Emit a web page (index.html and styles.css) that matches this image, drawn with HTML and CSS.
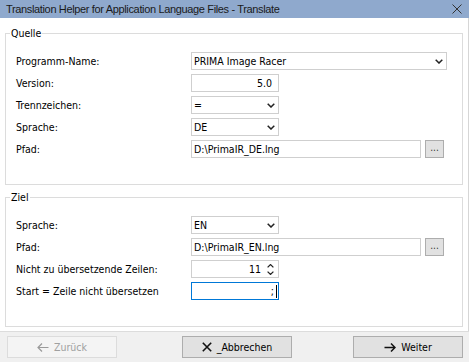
FILE: index.html
```html
<!DOCTYPE html>
<html lang="de">
<head>
    <meta charset="UTF-8">
    <title>Translation Helper for Application Language Files - Translate</title>
    <link rel="stylesheet" href="styles.css">
</head>
<body>
<div class="window">

    <!-- Titelleiste -->
    <div class="titlebar">
        <span class="title">Translation Helper for Application Language Files - Translate</span>
        <svg class="close" width="10" height="10" viewBox="0 0 10 10"><path d="M0.5 0.5 L9.5 9.5 M9.5 0.5 L0.5 9.5" stroke="#333" stroke-width="1" fill="none"/></svg>
    </div>

    <div class="content">
        <fieldset class="group">
            <legend>Quelle</legend>
            <div class="rows">
                <div class="row">
                    <label>Programm-Name:</label>
                    <div class="field select wide"><span>PRIMA Image Racer</span>
                        <svg class="chev" width="8" height="5" viewBox="0 0 8 5"><path d="M0.7 0.7 L4 4 L7.3 0.7" stroke="#222" stroke-width="1.5" fill="none"/></svg>
                    </div>
                </div>
                <div class="row">
                    <label>Version:</label>
                    <div class="field small right"><span>5.0</span></div>
                </div>
                <div class="row">
                    <label>Trennzeichen:</label>
                    <div class="field select small"><span>=</span>
                        <svg class="chev" width="8" height="5" viewBox="0 0 8 5"><path d="M0.7 0.7 L4 4 L7.3 0.7" stroke="#222" stroke-width="1.5" fill="none"/></svg>
                    </div>
                </div>
                <div class="row">
                    <label>Sprache:</label>
                    <div class="field select small"><span>DE</span>
                        <svg class="chev" width="8" height="5" viewBox="0 0 8 5"><path d="M0.7 0.7 L4 4 L7.3 0.7" stroke="#222" stroke-width="1.5" fill="none"/></svg>
                    </div>
                </div>
                <div class="row">
                    <label>Pfad:</label>
                    <div class="field path"><span>D:\PrimaIR_DE.lng</span></div>
                    <div class="browse">...</div>
                </div>
            </div>
        </fieldset>

        <fieldset class="group ziel">
            <legend>Ziel</legend>
            <div class="rows">
                <div class="row">
                    <label>Sprache:</label>
                    <div class="field select small"><span>EN</span>
                        <svg class="chev" width="8" height="5" viewBox="0 0 8 5"><path d="M0.7 0.7 L4 4 L7.3 0.7" stroke="#222" stroke-width="1.5" fill="none"/></svg>
                    </div>
                </div>
                <div class="row">
                    <label>Pfad:</label>
                    <div class="field path"><span>D:\PrimaIR_EN.lng</span></div>
                    <div class="browse">...</div>
                </div>
                <div class="row">
                    <label>Nicht zu übersetzende Zeilen:</label>
                    <div class="field small spin"><span>11</span>
                        <div class="spin-arrows">
                            <svg width="7" height="4" viewBox="0 0 7 4"><path d="M0.6 3.4 L3.5 0.6 L6.4 3.4" stroke="#222" stroke-width="1.3" fill="none"/></svg>
                            <svg width="7" height="4" viewBox="0 0 7 4"><path d="M0.6 0.6 L3.5 3.4 L6.4 0.6" stroke="#222" stroke-width="1.3" fill="none"/></svg>
                        </div>
                    </div>
                </div>
                <div class="row">
                    <label>Start = Zeile nicht übersetzen</label>
                    <div class="field small right focus"><span>;</span><i class="caret"></i></div>
                </div>
            </div>
        </fieldset>
    </div>

    <!-- Knopfleiste -->
    <div class="footer">
        <button class="btn" disabled>
            <svg width="12" height="9" viewBox="0 0 12 9"><path d="M11.5 4.5 H1 M5 0.5 L1 4.5 L5 8.5" stroke="#9a9a9a" stroke-width="1.2" fill="none"/></svg>
            Zurück
        </button>
        <button class="btn btn-cancel">
            <svg width="10" height="10" viewBox="0 0 10 10"><path d="M0.8 0.8 L9.2 9.2 M9.2 0.8 L0.8 9.2" stroke="#111" stroke-width="1.6" fill="none"/></svg>
            _Abbrechen
        </button>
        <button class="btn btn-next">
            <svg width="12" height="9" viewBox="0 0 12 9"><path d="M0.5 4.5 H11 M7 0.5 L11 4.5 L7 8.5" stroke="#111" stroke-width="1.5" fill="none"/></svg>
            Weiter
        </button>
    </div>

</div>
</body>
</html>
```

FILE: styles.css
```css
body {
    margin: 0;
    font-family: "DejaVu Sans Condensed", "DejaVu Sans", sans-serif;
    font-size: 10.5px;
    color: #000;
    background-color: #fff;
}
.window {
    width: 469px;
    height: 362px;
    display: flex;
    flex-direction: column;
    background-color: #fff;
    overflow: hidden;
}
.titlebar {
    height: 17px;
    flex: none;
    background-color: #8fa9cd;
    display: flex;
    align-items: center;
    justify-content: space-between;
    padding: 0 7px 1px 6px;
    font-family: "Liberation Sans", Arial, sans-serif;
    font-size: 11px;
    letter-spacing: -0.35px;
    color: #1a1a1a;
}
.content {
    flex: 1;
    padding: 9px 5px 0 5px;
    border-right: 1px solid #d6d6d6;
}
.group {
    margin: 0;
    padding: 13px 0 26px 10px;
    border: 1px solid #dcdcdc;
}
.group legend {
    padding: 0 1px;
    margin-left: -6px;
    line-height: 12px;
}
.ziel {
    margin-top: 6px;
}
.rows {
    display: flex;
    flex-direction: column;
    gap: 4px;
}
.row {
    display: flex;
    align-items: center;
    height: 18px;
}
.row label {
    width: 175px;
    flex: none;
}
.field {
    box-sizing: border-box;
    height: 18px;
    border: 1px solid #cfcfcf;
    background-color: #fff;
    display: flex;
    align-items: center;
    padding: 0 2px;
    white-space: nowrap;
}
.field span {
    flex: 1;
}
.wide {
    width: 256px;
}
.small {
    width: 88px;
}
.path {
    width: 230px;
}
.select {
    padding-right: 3px;
}
.chev {
    flex: none;
}
.right {
    text-align: right;
    padding-right: 6px;
}
.spin {
    text-align: right;
    padding-right: 4px;
}
.spin span {
    margin-right: 6px;
}
.spin-arrows {
    display: flex;
    flex-direction: column;
    gap: 3px;
}
.spin-arrows svg {
    display: block;
}
.focus {
    border-color: #0078d7;
    padding-right: 1px;
}
.caret {
    display: inline-block;
    width: 1px;
    height: 13px;
    background-color: #000;
    margin-left: 2px;
}
.browse {
    box-sizing: border-box;
    width: 19px;
    height: 18px;
    margin-left: 4px;
    border: 1px solid #adadad;
    background-color: #e1e1e1;
    text-align: center;
    line-height: 14px;
    font-size: 10px;
    color: #333;
}
.footer {
    flex: none;
    display: flex;
    align-items: center;
    padding: 4px 6px 4px 7px;
    border-top: 1px solid #dcdcdc;
    background-color: #f0f0f0;
}
.btn {
    box-sizing: border-box;
    width: 110px;
    height: 22px;
    display: flex;
    align-items: center;
    justify-content: center;
    gap: 5px;
    border: 1px solid #adadad;
    background-color: #e1e1e1;
    font-family: inherit;
    font-size: 10.5px;
    color: #000;
    padding: 0;
}
.btn:disabled {
    background-color: #f4f4f4;
    border-color: #dcdcdc;
    color: #a0a0a0;
}
.btn-cancel {
    margin-left: 65px;
}
.btn-next {
    margin-left: auto;
}
```
